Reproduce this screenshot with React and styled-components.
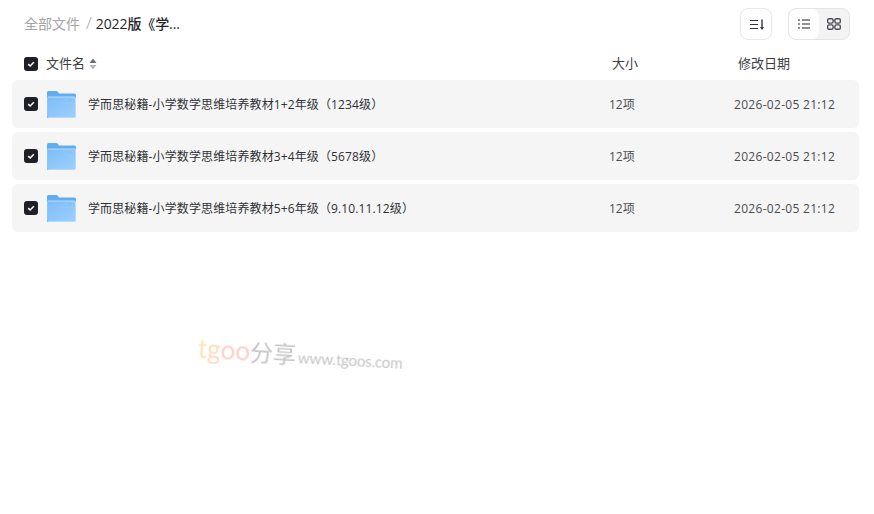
import React from "react";
import styled, { createGlobalStyle } from "styled-components";

const GlobalStyle = createGlobalStyle`
  html, body {
    margin: 0;
    padding: 0;
    background: #fff;
    font-family: "Open Sans", "Noto Sans CJK SC", sans-serif;
  }
`;

const files = [
  "学而思秘籍-小学数学思维培养教材1+2年级（1234级）",
  "学而思秘籍-小学数学思维培养教材3+4年级（5678级）",
  "学而思秘籍-小学数学思维培养教材5+6年级（9.10.11.12级）",
];

const CheckBox = () => (
  <Check>
    <svg width="10" height="10" viewBox="0 0 10 10">
      <path d="M2.2 5.2 L4.2 7 L7.8 3.2" fill="none" stroke="#fff" strokeWidth="1.6" />
    </svg>
  </Check>
);

const Folder = ({ id }) => (
  <svg width="29" height="27" viewBox="0 0 29 27">
    <defs>
      <linearGradient id={id} x1="0" y1="0" x2="1" y2="1">
        <stop offset="0" stopColor="#7cbdf9" />
        <stop offset="1" stopColor="#9ed0fc" />
      </linearGradient>
    </defs>
    <path d="M0 1.5 Q0 0 1.5 0 H9 Q10.5 0 11.2 1.2 L12 2.5 H27.5 Q29 2.5 29 4 V8 H0 Z" fill="#62adf0" />
    <path
      d="M0.5 6 H28 Q28.5 6 28.5 6.5 V25.5 Q28.5 26.5 27.5 26.5 H1.5 Q0.5 26.5 0.5 25.5 Z"
      fill={`url(#${id})`}
      stroke="#b4dbfd"
      strokeWidth="1"
    />
    <path d="M0 5.5 V25.5 Q0 27 1.5 27" fill="none" stroke="#62adf0" strokeWidth="1" />
    <rect x="21.5" y="8" width="3" height="2" fill="#84bff5" />
  </svg>
);

const App = () => {
  return (
    <Page>
      <GlobalStyle />
      <TopBar>
        <Crumbs>
          <CrumbRoot>全部文件</CrumbRoot>
          <Slash>/</Slash>
          <CrumbCurrent>2022版《学...</CrumbCurrent>
        </Crumbs>
        <Tools>
          <SortButton>
            <svg width="14" height="11" viewBox="0 0 14 11">
              <path d="M0 1.5 H8 M0 5.5 H8 M0 9.5 H8" stroke="#33343a" strokeWidth="1.2" />
              <path d="M12 0.5 V9" stroke="#33343a" strokeWidth="1.4" />
              <path d="M10 8 L12 11 L14 8 Z" fill="#33343a" />
            </svg>
          </SortButton>
          <ViewSwitch>
            <ViewButton active>
              <svg width="14" height="10" viewBox="0 0 14 10">
                <path d="M1 1 H3 M1 5 H3 M1 9 H3 M5 1 H13 M5 5 H13 M5 9 H13" stroke="#1f2026" strokeWidth="1.2" />
              </svg>
            </ViewButton>
            <ViewButton>
              <svg width="14" height="12" viewBox="0 0 14 12">
                <rect x="0.7" y="0.7" width="5.4" height="4.4" rx="1.4" fill="none" stroke="#4c4d53" strokeWidth="1.4" />
                <rect x="7.9" y="0.7" width="5.4" height="4.4" rx="1.4" fill="none" stroke="#4c4d53" strokeWidth="1.4" />
                <rect x="0.7" y="6.9" width="5.4" height="4.4" rx="1.4" fill="none" stroke="#4c4d53" strokeWidth="1.4" />
                <rect x="7.9" y="6.9" width="5.4" height="4.4" rx="1.4" fill="none" stroke="#4c4d53" strokeWidth="1.4" />
              </svg>
            </ViewButton>
          </ViewSwitch>
        </Tools>
      </TopBar>

      <HeaderRow>
        <CheckBox />
        <NameHead>
          文件名
          <SortArrows>
            <svg width="8" height="12" viewBox="0 0 8 12">
              <path d="M4 0.5 L7.5 5 H0.5 Z" fill="#6b6c72" />
              <path d="M4 11.5 L7.5 7 H0.5 Z" fill="#b5b5b8" />
            </svg>
          </SortArrows>
        </NameHead>
        <SizeHead>大小</SizeHead>
        <DateHead>修改日期</DateHead>
      </HeaderRow>

      <List>
        {files.map((name, i) => (
          <Row key={name}>
            <CheckBox />
            <FolderSlot>
              <Folder id={`folder-${i}`} />
            </FolderSlot>
            <FileName>{name}</FileName>
            <SizeCell>12项</SizeCell>
            <DateCell>2026-02-05 21:12</DateCell>
          </Row>
        ))}
      </List>

      <Watermark>
        <WmLatin color="#fde6b4">t</WmLatin>
        <WmLatin color="#fedcc0">g</WmLatin>
        <WmLatin color="#fdd0c8">oo</WmLatin>
        <WmCn>分享</WmCn>
        <WmUrl>www.tgoos.com</WmUrl>
      </Watermark>
    </Page>
  );
};

const Page = styled.div`
  position: relative;
  width: 874px;
  height: 514px;
  overflow: hidden;
  background: #fff;
  color: #2f3036;
`;

const TopBar = styled.div`
  display: flex;
  align-items: center;
  justify-content: space-between;
  height: 48px;
  padding: 0 24px;
`;

const Crumbs = styled.div`
  display: flex;
  align-items: center;
  font-size: 14px;
  margin-bottom: 3px;
`;

const CrumbRoot = styled.span`
  color: #a3a3a8;
`;

const Slash = styled.span`
  color: #a3a3a8;
  font-size: 17px;
  font-weight: 300;
  line-height: 1;
  margin: 0 4px 0 6px;
`;

const CrumbCurrent = styled.span`
  color: #25262b;
  font-weight: 500;
  letter-spacing: -0.1px;
`;

const Tools = styled.div`
  display: flex;
  align-items: center;
  gap: 16px;
`;

const SortButton = styled.div`
  display: flex;
  align-items: center;
  justify-content: center;
  box-sizing: border-box;
  width: 32px;
  height: 32px;
  padding-left: 2px;
  border: 1px solid #e8e8ea;
  border-radius: 8px;
  background: #fff;
`;

const ViewSwitch = styled.div`
  display: flex;
  box-sizing: border-box;
  width: 62px;
  height: 32px;
  border: 1px solid #e4e4e6;
  border-radius: 8px;
  background: #f3f3f4;
  overflow: hidden;
`;

const ViewButton = styled.div`
  display: flex;
  flex: 1;
  align-items: center;
  justify-content: center;
  background: ${(props) => (props.active ? "#fff" : "transparent")};
  border-radius: ${(props) => (props.active ? "7px" : "0")};
`;

const HeaderRow = styled.div`
  display: flex;
  align-items: center;
  height: 32px;
  padding-left: 24px;
  font-size: 13px;
  color: #3c3d43;
`;

const Check = styled.div`
  display: flex;
  align-items: center;
  justify-content: center;
  flex: none;
  width: 14px;
  height: 14px;
  border-radius: 3px;
  background: #1f2026;
`;

const NameHead = styled.div`
  display: flex;
  align-items: center;
  width: 566px;
  margin: -3px 0 0 8px;
`;

const SortArrows = styled.span`
  display: flex;
  margin: 3px 0 0 4px;
`;

const SizeHead = styled.div`
  width: 126px;
  margin-top: -3px;
`;

const DateHead = styled.div`
  margin-top: -3px;
`;

const List = styled.div`
  display: flex;
  flex-direction: column;
  gap: 4px;
  margin: 0 15px 0 12px;
`;

const Row = styled.div`
  display: flex;
  align-items: center;
  height: 48px;
  padding-left: 12px;
  background: #f5f5f5;
  border-radius: 6px;
  font-size: 12px;
`;

const FolderSlot = styled.div`
  display: flex;
  flex: none;
  margin: 1px 0 0 9px;
`;

const FileName = styled.div`
  width: 521px;
  margin-left: 12px;
  letter-spacing: 0.12px;
  white-space: nowrap;
`;

const SizeCell = styled.div`
  width: 125px;
  color: #4a4b51;
`;

const DateCell = styled.div`
  color: #4a4b51;
  letter-spacing: 0.3px;
  white-space: nowrap;
`;

const Watermark = styled.div`
  position: absolute;
  left: 198px;
  top: 331px;
  display: flex;
  align-items: baseline;
  white-space: nowrap;
  font-family: Lato, "Noto Sans CJK SC", sans-serif;
  transform: rotate(3deg);
  transform-origin: left center;
  filter: blur(0.4px);
`;

const WmLatin = styled.span`
  font-size: 26px;
  color: ${(props) => props.color};
`;

const WmCn = styled.span`
  font-size: 23px;
  color: #c4c4c6;
`;

const WmUrl = styled.span`
  font-size: 15.2px;
  letter-spacing: -0.25px;
  color: #c4c4c6;
  margin-left: 2px;
`;

export default App;
